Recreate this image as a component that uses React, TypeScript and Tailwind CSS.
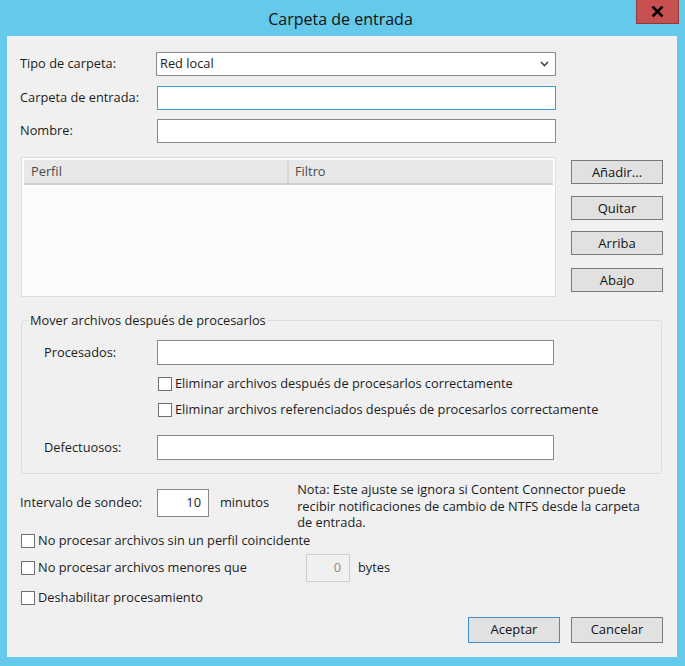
import React from "react";

const font = { fontFamily: '"Open Sans", "Noto Sans", sans-serif' };

function TextBox({ className = "h-[24px]", focused = false }: { className?: string; focused?: boolean }) {
  return (
    <div className={`bg-white border ${focused ? "border-[#3c9ee0]" : "border-[#8a8a8a]"} ${className}`} />
  );
}

function Check({ label, className = "" }: { label: string; className?: string }) {
  return (
    <div className={`flex items-center ${className}`}>
      <span className="w-[14px] h-[14px] bg-white border border-[#707070] shrink-0" />
      <span className="ml-[3px] leading-none">{label}</span>
    </div>
  );
}

function Btn({ label, className = "h-[24px]", primary = false }: { label: string; className?: string; primary?: boolean }) {
  return (
    <button
      className={`w-[92px] bg-[#e1e1e1] border ${primary ? "border-[#3c8ed3]" : "border-[#7a7a7a]"} text-[13px] text-[#111] leading-none ${className}`}
    >
      {label}
    </button>
  );
}

export default function App() {
  return (
    <div className="w-[685px] h-[666px] bg-[#65c9ea] text-[12.8px] text-[#1c1c1c] overflow-hidden" style={font}>
      {/* title bar */}
      <div className="relative h-[36px] flex items-center justify-center">
        <span className="text-[16px] text-[#111] mr-[4px] mt-[1px]">Carpeta de entrada</span>
        <div className="absolute right-[6px] top-0 w-[43px] h-[24px] bg-[#c75050] border border-[#8e3a3a] border-t-0 flex items-center justify-center">
          <svg width="13" height="11" viewBox="0 0 13 11">
            <path d="M1.5 0.5 L11.5 10.5 M11.5 0.5 L1.5 10.5" stroke="#000" strokeWidth="2.6" />
          </svg>
        </div>
      </div>

      {/* body */}
      <div className="ml-[7px] w-[670px] h-[621px] bg-[#f0f0f0] pl-[13px] pt-[16px]">
        <div className="flex items-center h-[24px]">
          <span className="w-[136px]">Tipo de carpeta:</span>
          <div className="w-[400px] h-[24px] bg-white border border-[#8a8a8a] flex items-center justify-between pl-[3px] pr-[6px]">
            <span>Red local</span>
            <svg width="9" height="6" viewBox="0 0 9 6">
              <path d="M1 1 L4.5 4.5 L8 1" stroke="#444" strokeWidth="1.6" fill="none" />
            </svg>
          </div>
        </div>
        <div className="flex items-center h-[24px] mt-[10px]">
          <span className="w-[137px]">Carpeta de entrada:</span>
          <TextBox className="w-[399px] h-[24px]" focused />
        </div>
        <div className="flex items-center h-[24px] mt-[9px]">
          <span className="w-[137px]">Nombre:</span>
          <TextBox className="w-[399px] h-[24px]" />
        </div>

        {/* profile list + buttons */}
        <div className="flex mt-[14px]">
          <div className="ml-[1px] w-[535px] h-[140px] bg-[#fcfcfc] border border-[#dedede] p-[2px]">
            <div className="flex h-[25px] bg-[#e8e8e8] border-b-2 border-[#cfcfcf]">
              <div className="w-[265px] pl-[7px] flex items-center border-r-2 border-[#d6d6d6] text-[#4a4a4a]">Perfil</div>
              <div className="pl-[6px] flex items-center text-[#4a4a4a]">Filtro</div>
            </div>
          </div>
          <div className="ml-[15px] flex flex-col pt-[3px]">
            <Btn label="Añadir..." />
            <Btn label="Quitar" className="h-[24px] mt-[12px]" />
            <Btn label="Arriba" className="h-[24px] mt-[11px]" />
            <Btn label="Abajo" className="h-[24px] mt-[13px]" />
          </div>
        </div>

        {/* group box */}
        <fieldset className="ml-[1px] mt-[17px] w-[641px] h-[160px] border border-[#dcdcdc] rounded-[3px] px-0 pt-0">
          <legend className="ml-[7px] px-[1px] leading-none">Mover archivos después de procesarlos</legend>
          <div className="pl-[22px] pt-[13px]">
            <div className="flex items-center h-[25px]">
              <span className="w-[113px]">Procesados:</span>
              <TextBox className="w-[397px] h-[25px]" />
            </div>
            <Check label="Eliminar archivos después de procesarlos correctamente" className="ml-[114px] mt-[12px]" />
            <Check label="Eliminar archivos referenciados después de procesarlos correctamente" className="ml-[114px] mt-[12px]" />
            <div className="flex items-center h-[25px] mt-[18px]">
              <span className="w-[113px]">Defectuosos:</span>
              <TextBox className="w-[397px] h-[25px]" />
            </div>
          </div>
        </fieldset>

        {/* polling interval */}
        <div className="flex mt-[7px]">
          <div className="flex items-center h-[28px] mt-[8px]">
            <span className="w-[137px]">Intervalo de sondeo:</span>
            <div className="w-[52px] h-[28px] bg-white border border-[#8a8a8a] flex items-center justify-end pr-[7px]">10</div>
            <span className="ml-[11px]">minutos</span>
          </div>
          <p className="ml-[28px] w-[348px] leading-[16.5px]">
            Nota: Este ajuste se ignora si Content Connector puede recibir notificaciones de cambio de NTFS desde la carpeta de entrada.
          </p>
        </div>

        <Check label="No procesar archivos sin un perfil coincidente" className="ml-[1px] mt-[3px]" />
        <div className="flex items-center mt-[6px] h-[28px]">
          <Check label="No procesar archivos menores que" className="ml-[1px] w-[285px]" />
          <div className="w-[44px] h-[28px] border border-[#cdcdcd] flex items-center justify-end pr-[8px] text-[#8a8a8a]">0</div>
          <span className="ml-[8px]">bytes</span>
        </div>
        <Check label="Deshabilitar procesamiento" className="ml-[1px] mt-[9px]" />

        <div className="flex justify-end mt-[12px] pr-[14px]">
          <Btn label="Aceptar" primary className="h-[26px]" />
          <Btn label="Cancelar" className="ml-[11px] h-[26px]" />
        </div>
      </div>
    </div>
  );
}
